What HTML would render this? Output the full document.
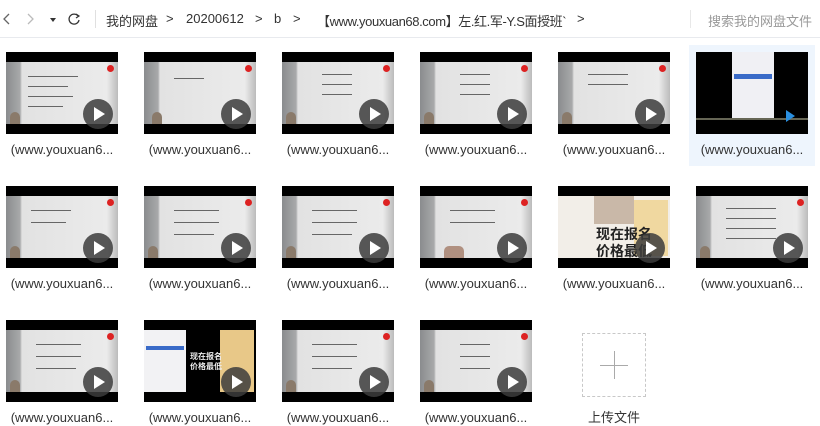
<!DOCTYPE html>
<html><head><meta charset="utf-8"><style>
*{margin:0;padding:0;box-sizing:border-box}
body{width:820px;height:424px;background:#fff;position:relative;overflow:hidden;font-family:"Liberation Sans","Noto Sans CJK SC",sans-serif;color:#333}
.hd{position:absolute;left:0;top:0;width:820px;height:38px;border-bottom:1px solid #e8eaee}
.hd span{position:absolute;top:11px;font-size:13px;color:#333;white-space:nowrap}
.it{position:absolute;width:112px}
.th{position:absolute;left:0;top:0;width:112px;height:82px;background:#000;overflow:hidden}
.wb{position:absolute;left:0;top:10px;width:112px;height:62px;background:linear-gradient(90deg,#8a8c8e 0,#a8a9aa 14px,#e2e2e2 16px,#ebebeb 90%,#bbb 100%)}
.wb i{position:absolute;height:1px;background:#666}
.pl{position:absolute;left:77px;top:47px;width:30px;height:30px;border-radius:50%;background:rgba(60,60,60,.85)}
.pl:after{content:"";position:absolute;left:11px;top:8px;border-left:11px solid #fff;border-top:7px solid transparent;border-bottom:7px solid transparent}
.lb{position:absolute;left:0;top:90px;width:112px;text-align:center;font-size:13px;color:#333;white-space:nowrap}
.pe{position:absolute;left:4px;top:50px;width:10px;height:12px;border-radius:5px 5px 0 0;background:#8a7a6a}
.lg{position:absolute;right:4px;top:3px;width:7px;height:7px;border-radius:50%;background:#d22}
</style></head><body>
<div class="hd">
<svg style="position:absolute;left:0;top:12px" width="90" height="14" viewBox="0 0 90 14"><path d="M9 2 L4 7 L9 12" stroke="#666" fill="none" stroke-width="1.3"/><path d="M28 2 L33 7 L28 12" stroke="#bbb" fill="none" stroke-width="1.3"/><path d="M50 6 L56 6 L53 10 Z" fill="#333"/><path d="M78 4 A5 5 0 1 0 79 8" stroke="#333" fill="none" stroke-width="1.3"/><path d="M76 2 L79 4 L76 6" stroke="#333" fill="none" stroke-width="1.2"/></svg>
<div style="position:absolute;left:95px;top:10px;width:1px;height:18px;background:#e0e0e0"></div>
<span style="left:106px">我的网盘</span>
<span style="left:166px">&gt;</span>
<span style="left:186px">20200612</span>
<span style="left:255px">&gt;</span>
<span style="left:274px">b</span>
<span style="left:293px">&gt;</span>
<span style="left:317px;letter-spacing:-0.4px">【www.youxuan68.com】左.红.军-Y.S面授班`</span>
<span style="left:577px">&gt;</span>
<div style="position:absolute;left:690px;top:10px;width:1px;height:18px;background:#e8e8e8"></div>
<span style="left:708px;color:#999">搜索我的网盘文件</span>
</div>
<div style="position:absolute;left:689px;top:45px;width:126px;height:121px;background:#eef5fd"></div>

<!-- row 1 -->
<div class="it" style="left:6px;top:52px"><div class="th"><div class="wb"><i style="left:22px;top:14px;width:50px"></i><i style="left:22px;top:24px;width:40px"></i><i style="left:22px;top:34px;width:45px"></i><i style="left:22px;top:44px;width:35px"></i><div class="pe"></div><div class="lg"></div></div><div class="pl"></div></div><div class="lb">(www.youxuan6...</div></div>
<div class="it" style="left:144px;top:52px"><div class="th"><div class="wb"><i style="left:30px;top:16px;width:30px"></i><div class="pe" style="left:8px"></div><div class="lg"></div></div><div class="pl"></div></div><div class="lb">(www.youxuan6...</div></div>
<div class="it" style="left:282px;top:52px"><div class="th"><div class="wb"><i style="left:40px;top:12px;width:30px"></i><i style="left:40px;top:22px;width:30px"></i><i style="left:40px;top:32px;width:30px"></i><div class="pe"></div><div class="lg"></div></div><div class="pl"></div></div><div class="lb">(www.youxuan6...</div></div>
<div class="it" style="left:420px;top:52px"><div class="th"><div class="wb"><i style="left:40px;top:12px;width:30px"></i><i style="left:40px;top:22px;width:30px"></i><i style="left:40px;top:32px;width:30px"></i><div class="pe"></div><div class="lg"></div></div><div class="pl"></div></div><div class="lb">(www.youxuan6...</div></div>
<div class="it" style="left:558px;top:52px"><div class="th"><div class="wb"><i style="left:30px;top:12px;width:40px"></i><i style="left:30px;top:22px;width:40px"></i><div class="pe"></div><div class="lg"></div></div><div class="pl"></div></div><div class="lb">(www.youxuan6...</div></div>
<div class="it" style="left:696px;top:52px"><div class="th"><div style="position:absolute;left:36px;top:0;width:42px;height:66px;background:#f0f0f4"><div style="position:absolute;left:2px;top:22px;width:38px;height:5px;background:#3a6bc8"></div></div><div style="position:absolute;left:0;top:66px;width:112px;height:2px;background:#665"></div><div style="position:absolute;left:90px;top:58px;border-left:9px solid #2a8fe0;border-top:6px solid transparent;border-bottom:6px solid transparent"></div></div><div class="lb">(www.youxuan6...</div></div>

<!-- row 2 -->
<div class="it" style="left:6px;top:186px"><div class="th"><div class="wb"><i style="left:25px;top:14px;width:40px"></i><i style="left:25px;top:26px;width:35px"></i><div class="pe"></div><div class="lg"></div></div><div class="pl"></div></div><div class="lb">(www.youxuan6...</div></div>
<div class="it" style="left:144px;top:186px"><div class="th"><div class="wb"><i style="left:30px;top:14px;width:45px"></i><i style="left:30px;top:26px;width:45px"></i><i style="left:30px;top:38px;width:40px"></i><div class="pe"></div><div class="lg"></div></div><div class="pl"></div></div><div class="lb">(www.youxuan6...</div></div>
<div class="it" style="left:282px;top:186px"><div class="th"><div class="wb"><i style="left:30px;top:14px;width:45px"></i><i style="left:30px;top:26px;width:45px"></i><i style="left:30px;top:38px;width:40px"></i><div class="pe"></div><div class="lg"></div></div><div class="pl"></div></div><div class="lb">(www.youxuan6...</div></div>
<div class="it" style="left:420px;top:186px"><div class="th"><div class="wb"><i style="left:30px;top:14px;width:45px"></i><i style="left:30px;top:26px;width:45px"></i><div class="pe" style="left:24px;width:20px;background:#b09080"></div><div class="lg"></div></div><div class="pl"></div></div><div class="lb">(www.youxuan6...</div></div>
<div class="it" style="left:558px;top:186px"><div class="th"><div style="position:absolute;left:0;top:10px;width:112px;height:62px;background:#f2eee8"></div><div style="position:absolute;left:36px;top:10px;width:40px;height:28px;background:#c9b8a8"></div><div style="position:absolute;left:76px;top:14px;width:34px;height:56px;background:#f0d8a0"></div><div style="position:absolute;left:38px;top:40px;font-size:14px;font-weight:bold;color:#222;line-height:17px">现在报名<br>价格最低</div><div class="pl"></div></div><div class="lb">(www.youxuan6...</div></div>
<div class="it" style="left:696px;top:186px"><div class="th"><div class="wb"><i style="left:30px;top:12px;width:50px"></i><i style="left:30px;top:22px;width:50px"></i><i style="left:30px;top:32px;width:50px"></i><i style="left:30px;top:42px;width:50px"></i><div class="pe"></div><div class="lg"></div></div><div class="pl"></div></div><div class="lb">(www.youxuan6...</div></div>

<!-- row 3 -->
<div class="it" style="left:6px;top:320px"><div class="th"><div class="wb"><i style="left:30px;top:14px;width:45px"></i><i style="left:30px;top:26px;width:45px"></i><i style="left:30px;top:38px;width:40px"></i><div class="pe"></div><div class="lg"></div></div><div class="pl"></div></div><div class="lb">(www.youxuan6...</div></div>
<div class="it" style="left:144px;top:320px"><div class="th"><div style="position:absolute;left:0;top:10px;width:42px;height:62px;background:#f2f2f4"><div style="position:absolute;left:2px;top:16px;width:38px;height:4px;background:#3a6bc8"></div></div><div style="position:absolute;left:76px;top:10px;width:34px;height:62px;background:#e8c888"></div><div style="position:absolute;left:46px;top:32px;font-size:8px;font-weight:bold;color:#eee;line-height:10px">现在报名<br>价格最低</div><div class="pl"></div></div><div class="lb">(www.youxuan6...</div></div>
<div class="it" style="left:282px;top:320px"><div class="th"><div class="wb"><i style="left:30px;top:14px;width:45px"></i><i style="left:30px;top:26px;width:45px"></i><i style="left:30px;top:38px;width:40px"></i><div class="pe"></div><div class="lg"></div></div><div class="pl"></div></div><div class="lb">(www.youxuan6...</div></div>
<div class="it" style="left:420px;top:320px"><div class="th"><div class="wb"><i style="left:40px;top:14px;width:30px"></i><i style="left:40px;top:26px;width:30px"></i><i style="left:40px;top:38px;width:30px"></i><div class="pe"></div><div class="lg"></div></div><div class="pl"></div></div><div class="lb">(www.youxuan6...</div></div>

<div style="position:absolute;left:582px;top:333px;width:64px;height:64px;border:1px dashed #c8c8c8"><div style="position:absolute;left:17px;top:31px;width:28px;height:1px;background:#aaa"></div><div style="position:absolute;left:31px;top:17px;width:1px;height:28px;background:#aaa"></div></div>
<div style="position:absolute;left:582px;top:407px;width:64px;text-align:center;font-size:13px;color:#333">上传文件</div>
</body></html>
